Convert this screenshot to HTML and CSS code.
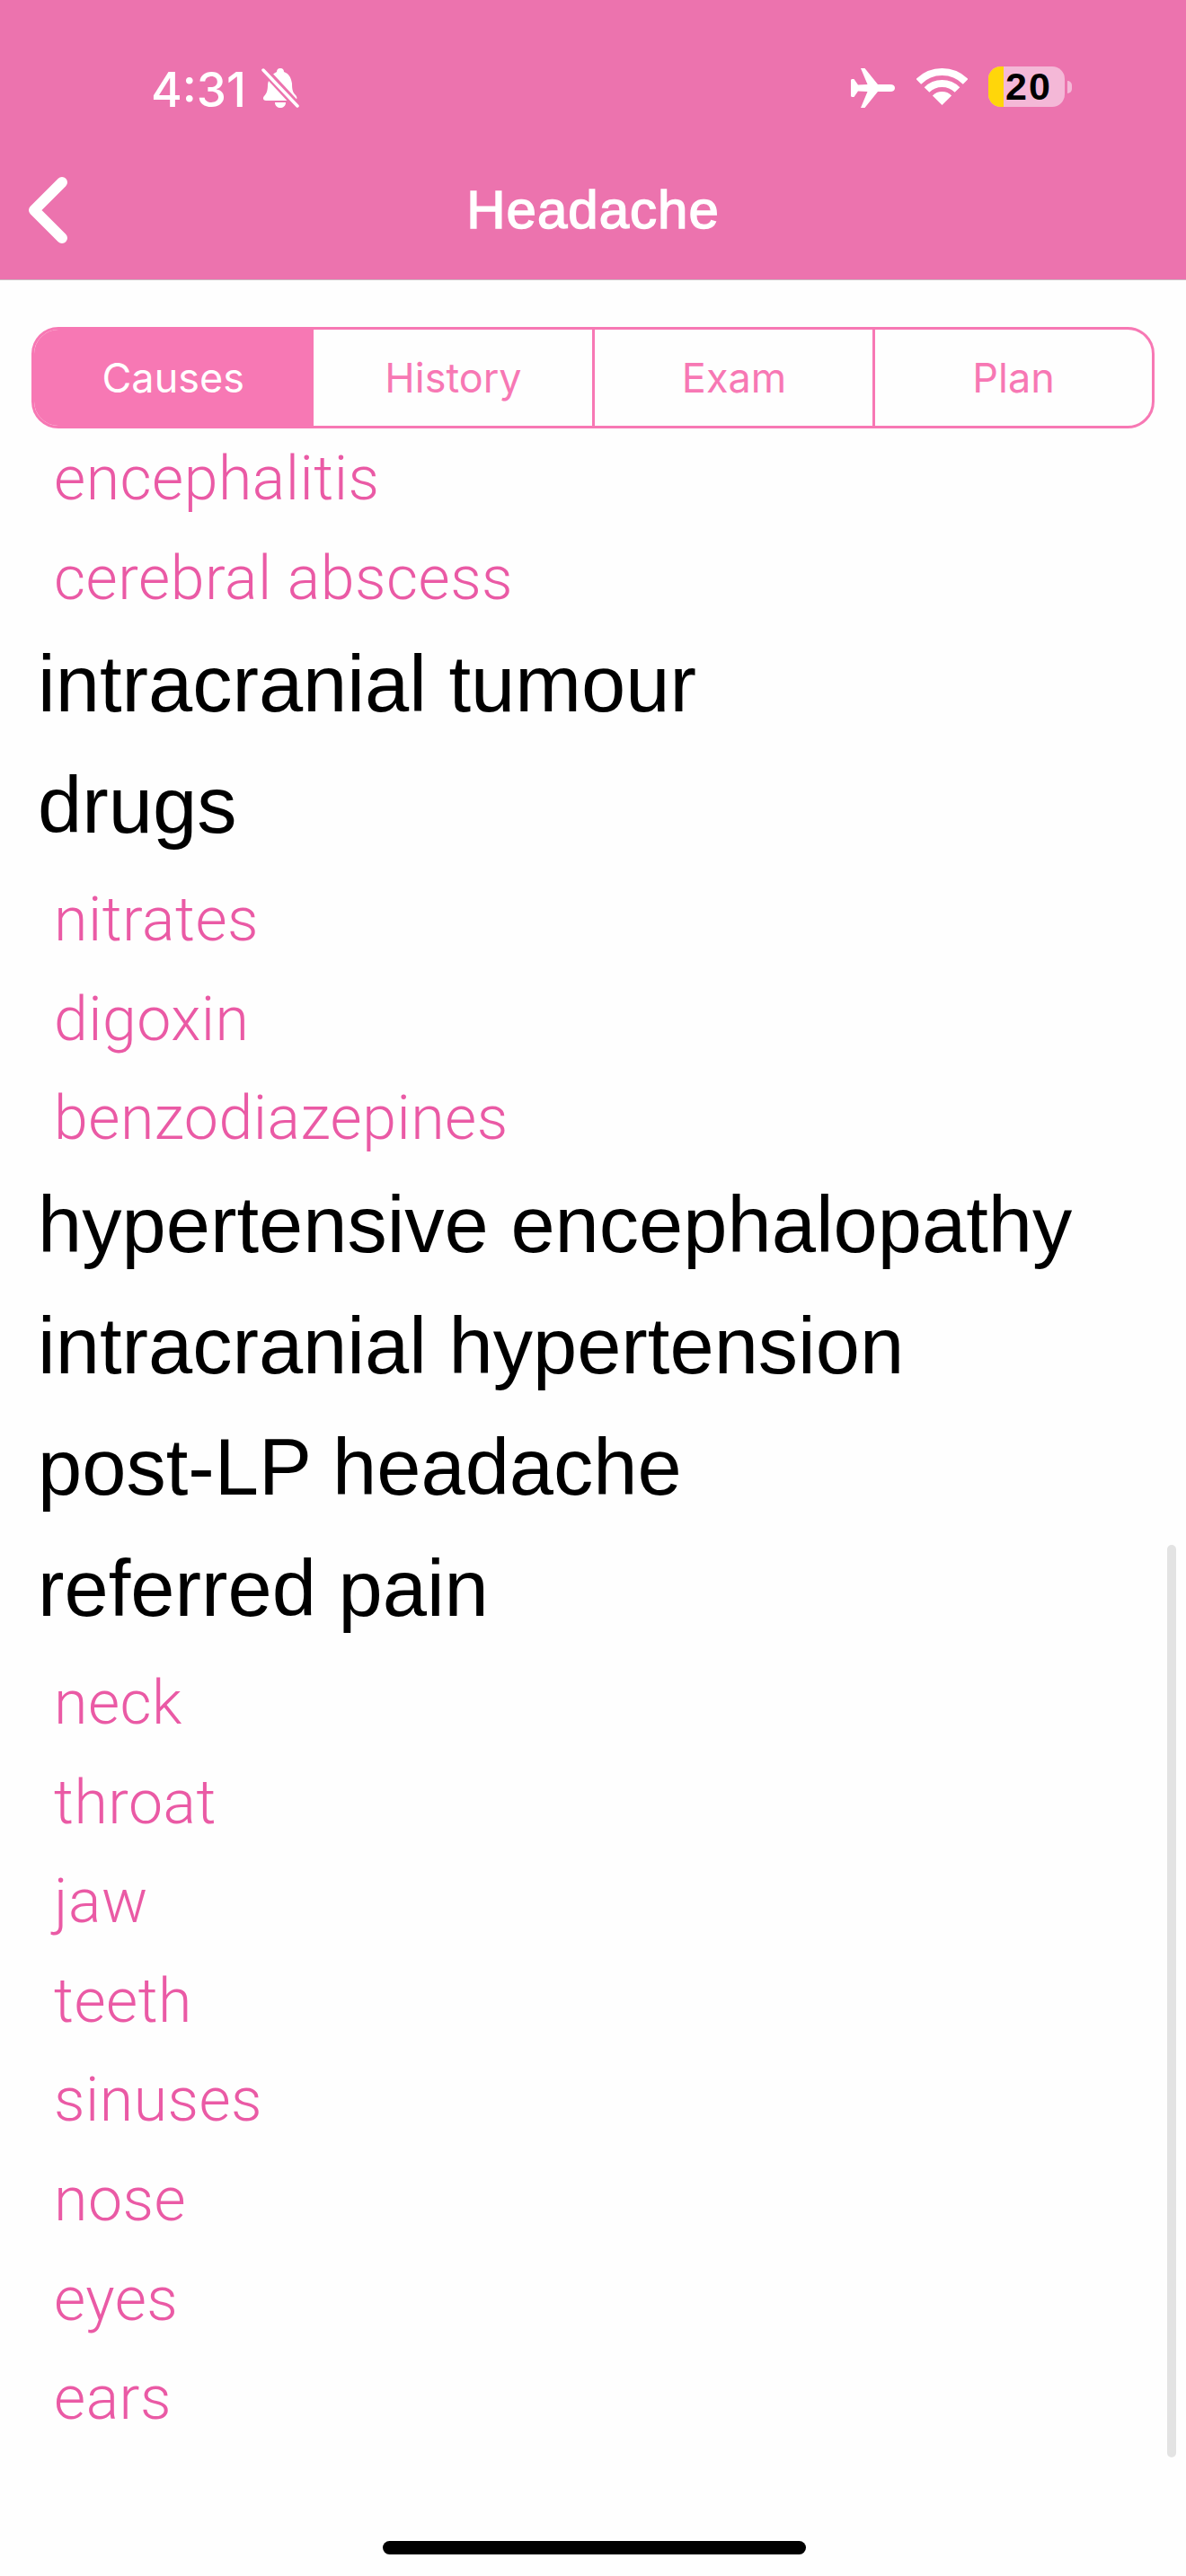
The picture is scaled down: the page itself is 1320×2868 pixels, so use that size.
FILE: index.html
```html
<!DOCTYPE html>
<html lang="en">

<head>
    <meta charset="UTF-8">
    <meta name="viewport" content="width=device-width, initial-scale=1.0">
    <title>Headache</title>
    <link rel="stylesheet" href="styles.css">
</head>

<body>
    <div class="phone">
        <header class="top">
            <div class="statusBar">
                <div class="statusLeft">
                    <span class="time">4:31</span>
                    <svg class="bell" viewBox="0 0 42 45">
                        <path fill="#fff" d="M21 1C24 1 25 3 25 5C31 7 33 12 34 18C34 25 35 28 38 31C40 33 40 36 37 37H5C2 37 1 34 3 32C6 29 7 25 7 19C8 13 11 8 17 5C17 3 18 1 21 1Z" />
                        <path fill="#fff" d="M15 39H27C27 43 24 45 21 45C18 45 15 43 15 39Z" />
                        <path class="bellGap" d="M1 1L41 44" />
                        <path class="bellSlash" d="M2 3L40 43" />
                    </svg>
                </div>
                <div class="statusRight">
                    <svg class="plane" viewBox="0 0 49 44">
                        <path fill="#fff" d="M49 22C49 24.5 47 26 44 26H30L15.5 44H11L18.5 26L8 25.5L3.5 32H1L0 31V13L1 12H3.5L8 18.5L18.5 18L11 0H15.5L30 18H44C47 18 49 19.5 49 22Z" />
                    </svg>
                    <svg class="wifi" viewBox="0 0 57 41">
                        <path class="wifiArc" d="M2.34 14.84A37 37 0 0 1 54.66 14.84" />
                        <path class="wifiArc" d="M11.53 24.03A24 24 0 0 1 45.47 24.03" />
                        <path fill="#fff" d="M28.5 41L17.9 30.4A15 15 0 0 1 39.1 30.4Z" />
                    </svg>
                    <div class="battery">
                        <div class="batteryBody">
                            <span class="batteryFill"></span>
                            <span class="batteryText">20</span>
                        </div>
                        <span class="batteryCap"></span>
                    </div>
                </div>
            </div>
            <nav class="navBar">
                <svg class="back" viewBox="0 0 44 76">
                    <path d="M38 7L7 38L38 69" />
                </svg>
                <h1 class="title">Headache</h1>
                <span></span>
            </nav>
        </header>

        <ul class="tabs">
            <li class="tab active">Causes</li>
            <li class="tab">History</li>
            <li class="tab">Exam</li>
            <li class="tab">Plan</li>
        </ul>

        <ul class="causes">
            <li class="sub">encephalitis</li>
            <li class="sub">cerebral abscess</li>
            <li class="main">intracranial tumour</li>
            <li class="main">drugs</li>
            <li class="sub">nitrates</li>
            <li class="sub">digoxin</li>
            <li class="sub">benzodiazepines</li>
            <li class="main">hypertensive encephalopathy</li>
            <li class="main">intracranial hypertension</li>
            <li class="main">post-LP headache</li>
            <li class="main">referred pain</li>
            <li class="sub">neck</li>
            <li class="sub">throat</li>
            <li class="sub">jaw</li>
            <li class="sub">teeth</li>
            <li class="sub">sinuses</li>
            <li class="sub">nose</li>
            <li class="sub">eyes</li>
            <li class="sub">ears</li>
        </ul>

        <div class="scrollThumb"></div>
        <div class="homeBar"></div>
    </div>
</body>

</html>
```

FILE: styles.css
```css
* {
    padding: 0;
    margin: 0;
    list-style: none;
    box-sizing: border-box;
}

body {
    width: 1320px;
    height: 2868px;
    overflow: hidden;
    background-color: #fefefe;
    font-family: "Liberation Sans", Arial, sans-serif;
}

.phone {
    position: relative;
    width: 1320px;
    height: 2868px;
    overflow: hidden;
}

/* pink header */
.top {
    height: 312px;
    background-color: #ec73ae;
    border-bottom: 1px solid #c9b9c1;
    padding-top: 74px;
}

.statusBar {
    display: flex;
    justify-content: space-between;
    align-items: flex-start;
    height: 46px;
    padding-left: 168px;
    padding-right: 127px;
}

.statusLeft {
    display: flex;
    align-items: flex-start;
    gap: 17px;
}

.time {
    font-family: Inter, sans-serif;
    font-weight: 500;
    font-size: 53px;
    line-height: 52px;
    color: #fff;
}

.bell {
    width: 42px;
    height: 45px;
    margin-top: 1px;
}

.bellGap {
    fill: none;
    stroke: #ec73ae;
    stroke-width: 9;
}

.bellSlash {
    fill: none;
    stroke: #fff;
    stroke-width: 3.5;
    stroke-linecap: round;
}

.statusRight {
    display: flex;
    align-items: flex-start;
}

.plane {
    width: 49px;
    height: 44px;
    margin-top: 2px;
    margin-right: 24px;
}

.wifi {
    width: 57px;
    height: 41px;
    margin-top: 2px;
    margin-right: 23px;
}

.wifiArc {
    fill: none;
    stroke: #fff;
    stroke-width: 8;
}

.battery {
    display: flex;
    align-items: center;
}

.batteryBody {
    display: flex;
    width: 85px;
    height: 45px;
    border-radius: 14px;
    background-color: #f4b8d7;
}

.batteryFill {
    width: 17px;
    border-radius: 14px 0 0 14px;
    background-color: #ffd60a;
}

.batteryText {
    padding-left: 2px;
    font-weight: bold;
    font-size: 43px;
    line-height: 45px;
    color: #000;
    letter-spacing: 2px;
}

.batteryCap {
    width: 5px;
    height: 14px;
    margin-left: 3px;
    background-color: #f4b8d7;
    border-radius: 0 5px 5px 0;
}

.navBar {
    display: grid;
    grid-template-columns: 1fr auto 1fr;
    align-items: center;
    height: 154px;
    margin-top: 37px;
    padding-left: 31px;
}

.back {
    width: 44px;
    height: 76px;
}

.back path {
    fill: none;
    stroke: #fff;
    stroke-width: 12;
    stroke-linecap: round;
    stroke-linejoin: round;
}

.title {
    font-size: 60px;
    font-weight: normal;
    -webkit-text-stroke: 1.5px #fff;
    letter-spacing: 1px;
    color: #fff;
    padding-right: 31px;
    padding-bottom: 2px;
}

/* segmented control */
.tabs {
    display: grid;
    grid-template-columns: 309.5px 312.5px 312.5px 309.5px;
    height: 113px;
    margin: 52px 35px 0;
    border: 3px solid #f778b4;
    border-radius: 30px;
    overflow: hidden;
}

.tab {
    display: flex;
    align-items: center;
    justify-content: center;
    font-family: Inter, sans-serif;
    font-size: 45px;
    color: #f778b4;
}

.tab + .tab {
    margin-left: -1.5px;
    border-left: 3px solid #f778b4;
}

.tab.active {
    background-color: #f778b4;
    color: #fff;
}

.causes {
    padding-left: 42px;
}

.main {
    height: 135px;
    font-size: 88.5px;
    line-height: 128px;
    color: #000;
}

.sub {
    height: 110.6px;
    padding-left: 18px;
    font-family: Roboto, sans-serif;
    font-weight: 300;
    font-size: 68px;
    line-height: 113px;
    letter-spacing: 0.5px;
    color: #ea5aa5;
}

/* overlays */
.scrollThumb {
    position: absolute;
    left: 1299px;
    top: 1720px;
    width: 10px;
    height: 1016px;
    background-color: #e3e3e3;
    border-radius: 5px;
}

.homeBar {
    position: absolute;
    left: 426px;
    top: 2829px;
    width: 471px;
    height: 15px;
    background-color: #000;
    border-radius: 8px;
}
```
